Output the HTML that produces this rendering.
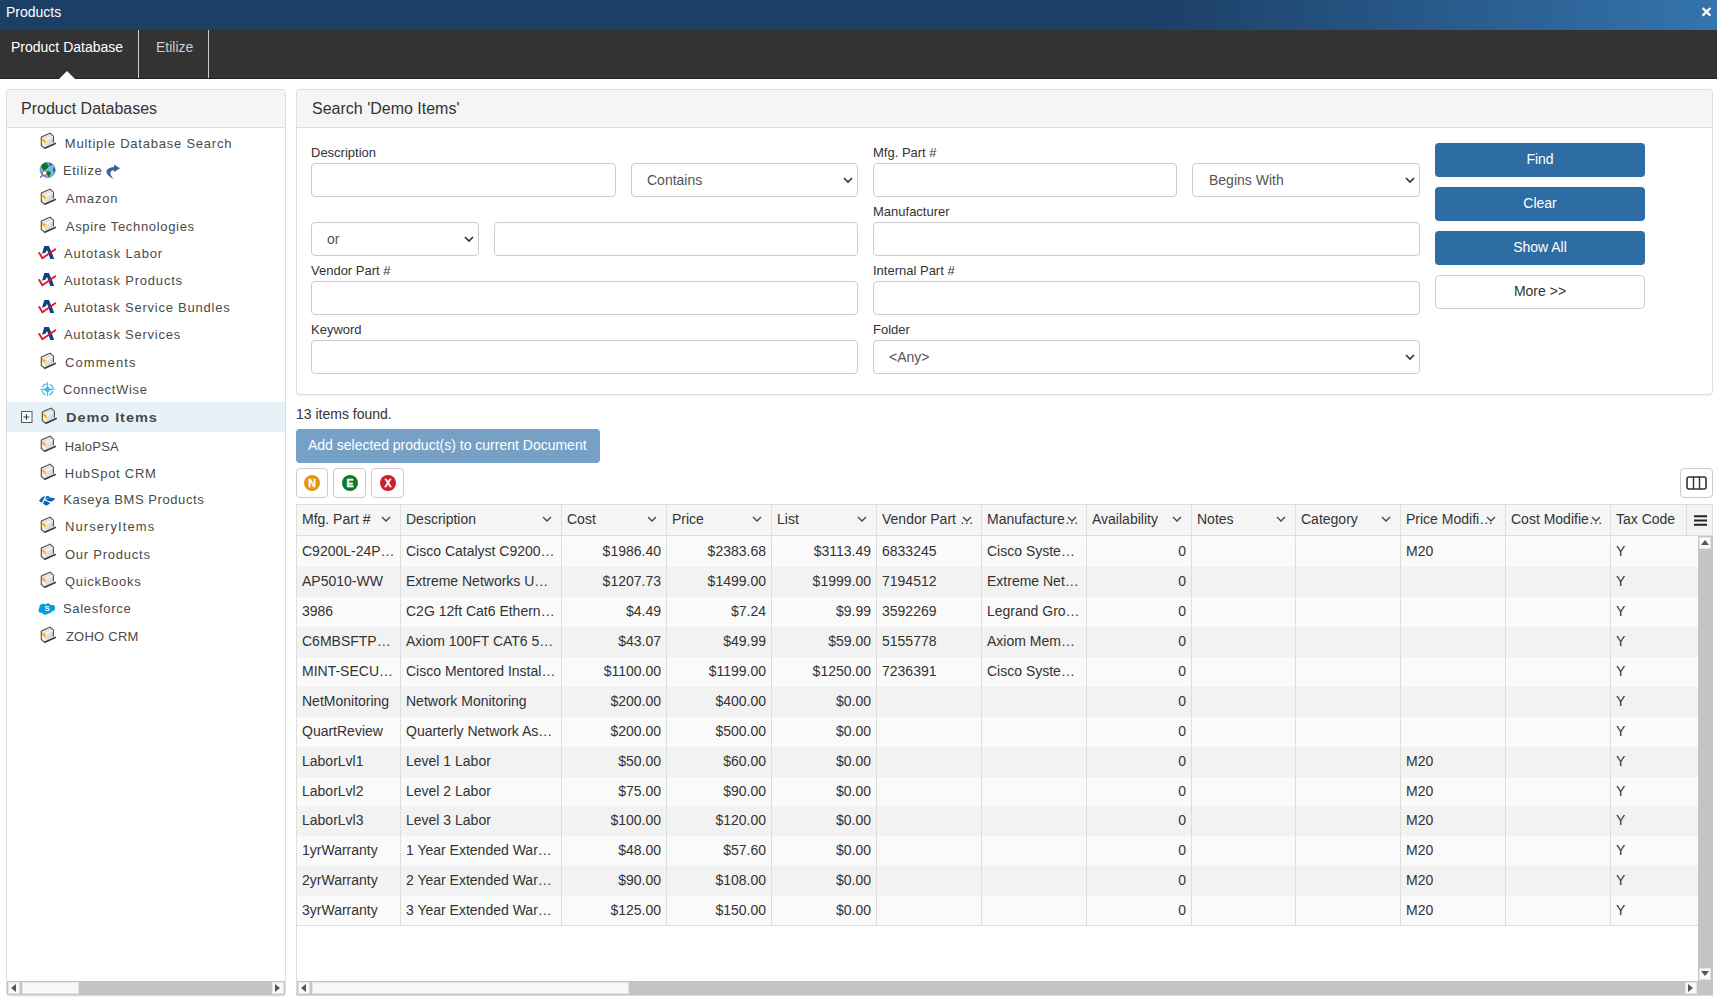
<!DOCTYPE html>
<html><head><meta charset="utf-8">
<style>
*{box-sizing:border-box;margin:0;padding:0}
html,body{width:1717px;height:1002px;overflow:hidden;background:#fff;font-family:"Liberation Sans",sans-serif;color:#333}
.abs{position:absolute}
#title{left:0;top:0;width:1717px;height:30px;background:linear-gradient(to right,#1c3f66 0%,#1c3f66 67%,#3474ad 100%);color:#fff;font-size:14px}
#title .t{left:6px;top:4px;line-height:16px}
#tabs{left:0;top:30px;width:1717px;height:49px;background:#333;border-bottom:1px solid #222}
.tab{top:0;height:48px;font-size:14px;line-height:16px;padding-top:9px}
.sep{top:0;width:1px;height:48px;background:#ccc}
.panel{border:1px solid #ddd;border-radius:4px;background:#fff;box-shadow:0 1px 1px rgba(0,0,0,.05)}
.phead{left:0;top:0;right:0;height:38px;background:#f5f5f5;border-bottom:1px solid #ddd;border-radius:3px 3px 0 0;font-size:16px;line-height:18px}
.tree{font-size:13px;letter-spacing:0.7px;color:#4a4a4a;line-height:16px;white-space:nowrap}
.lbl{font-size:13px;line-height:15px;color:#333}
.inp{border:1px solid #ccc;border-radius:4px;background:#fff;height:34px}
.sel{border:1px solid #ccc;border-radius:4px;background:#fff;height:34px;font-size:14px;color:#555;line-height:16px}
.sel span{position:absolute;top:8px}
.sel svg{position:absolute;top:13px}
.btn{border-radius:4px;background:#2e6da4;color:#fff;font-size:14px;text-align:center;line-height:16px;padding-top:8px;height:34px;width:210px}
.btn2{border:1px solid #ccc;border-radius:4px;background:#fff;color:#333;font-size:14px;text-align:center;line-height:16px;padding-top:7px;height:34px;width:210px}
.ib{border:1px solid #ccc;border-radius:4px;background:#fff;height:30px}
.grid{font-size:14px;color:#333}
.hc{position:absolute;top:0;height:30px;border-right:1px solid #ddd;line-height:16px;padding-top:7px;padding-left:5px;white-space:nowrap;overflow:hidden}
.row{position:absolute;left:0;height:30px;width:1401px}
.c{position:absolute;top:0;height:30px;border-right:1px solid #ddd;line-height:16px;padding:7px 5px 0 5px;white-space:nowrap;overflow:hidden;text-overflow:ellipsis}
.r{text-align:right}
</style></head><body>
<div id="title" class="abs"><div class="t abs">Products</div>
<svg class="abs" style="left:1701px;top:7px" width="11" height="10" viewBox="0 0 11 10"><path d="M1.6 1 L9.4 8.6 M9.4 1 L1.6 8.6" stroke="#fff" stroke-width="2.3"/></svg>
</div>
<div id="tabs" class="abs">
<div class="tab abs" style="left:11px;color:#fff">Product Database</div>
<div class="sep abs" style="left:138px"></div>
<div class="tab abs" style="left:156px;color:#ccc">Etilize</div>
<div class="sep abs" style="left:208px"></div>
<svg class="abs" style="left:59px;top:41px" width="16" height="8" viewBox="0 0 16 8"><path d="M0 8 L8 0 L16 8 Z" fill="#fff"/></svg>
</div>

<!-- left panel -->
<div class="panel abs" style="left:6px;top:89px;width:280px;height:907px">
<div class="phead abs"><div class="abs" style="left:14px;top:10px">Product Databases</div></div>
</div>
<div class="abs" style="left:7px;top:402px;width:278px;height:30px;background:#e6f2f8"></div>
<svg class="abs" style="left:40px;top:132px" width="18" height="18" viewBox="0 0 18 18">
<defs><linearGradient id="dbf40132" x1="0" y1="0" x2="1" y2="1"><stop offset="0" stop-color="#fafafa"/><stop offset="1" stop-color="#c4c4c4"/></linearGradient></defs>
<path d="M1.3 5 L10.1 1.1 L13.4 4.2 L4.6 8 Z" fill="#e4e4e4"/>
<path d="M4.6 8 L13.4 4.2 L13.4 10.6 L4.6 16.3 Z" fill="url(#dbf40132)"/>
<path d="M1.3 5 L4.6 8 L4.6 16.3 L1.3 13.4 Z" fill="#f4f4f4"/>
<path d="M1.3 5 L10.1 1.1 L13.4 4.2 L13.4 10.6 M1.3 5 L1.3 13.4 L4.6 16.3" fill="none" stroke="#4a4a4a" stroke-width="1.1"/>
<path d="M4.3 16.6 L15.8 11.2" fill="none" stroke="#3a3a3a" stroke-width="1.7"/>
<path d="M4.8 8.2 L13 4.6" fill="none" stroke="#fff" stroke-width="0.9"/>
<path d="M2 6.2 L3.6 7.2 L5.5 8 L5.8 11.5 L4.2 10.8 L2.3 8.8 Z" fill="#f7b500"/>
</svg>
<div class="tree abs" style="left:64.8px;top:135.5px;letter-spacing:0.773px;">Multiple Database Search</div>
<svg class="abs" style="left:36px;top:159px" width="22" height="22" viewBox="0 0 22 22">
<circle cx="11.65" cy="11" r="7.5" fill="#82b2e8" stroke="#3a52cc" stroke-width="0.9" stroke-dasharray="1.4 0.6"/>
<path d="M5.4 6.3 L7.8 3.9 L10.6 3.8 L13 7.2 L11.6 9 L9.6 10.4 L8.5 11.9 L6.6 10.2 L5.4 8.6 Z" fill="#007a1e"/>
<path d="M9 5.2 L10 6 L9.2 6.6 Z" fill="#82b2e8"/>
<path d="M13.3 4.1 L16.4 5.4 L14.2 6.9 L13.4 6 Z" fill="#007a1e"/>
<path d="M17.2 8.6 L19.1 10.2 L19 12.2 L17.6 13.2 L17 11 Z" fill="#007a1e"/>
<path d="M11.1 12.6 L13.2 12 L15.2 14.4 L13.4 16.4 L12.6 18.6 L11.6 16.2 L10.8 14.2 Z" fill="#007a1e"/>
<circle cx="8.6" cy="14" r="2.3" fill="#fff" stroke="#7a6050" stroke-width="0.9"/>
<path d="M6.5 16.2 L4 18.6" stroke="#6a5a50" stroke-width="1.3"/>
</svg>
<div class="tree abs" style="left:62.9px;top:162.5px;letter-spacing:0.709px;">Etilize</div>
<svg class="abs" style="left:102px;top:160px" width="22" height="22" viewBox="0 0 22 22">
<path d="M18 8.35 L12 4.6 L12 6.9 Q5 7.5 4.3 11.5 Q4.5 15.5 11.6 18.9 Q8 15 8.3 12.5 Q9 10.3 12.1 10.2 L12.1 11.9 Z" fill="#3d6197"/>
</svg>
<svg class="abs" style="left:40px;top:188px" width="18" height="18" viewBox="0 0 18 18">
<defs><linearGradient id="dbf40188" x1="0" y1="0" x2="1" y2="1"><stop offset="0" stop-color="#fafafa"/><stop offset="1" stop-color="#c4c4c4"/></linearGradient></defs>
<path d="M1.3 5 L10.1 1.1 L13.4 4.2 L4.6 8 Z" fill="#e4e4e4"/>
<path d="M4.6 8 L13.4 4.2 L13.4 10.6 L4.6 16.3 Z" fill="url(#dbf40188)"/>
<path d="M1.3 5 L4.6 8 L4.6 16.3 L1.3 13.4 Z" fill="#f4f4f4"/>
<path d="M1.3 5 L10.1 1.1 L13.4 4.2 L13.4 10.6 M1.3 5 L1.3 13.4 L4.6 16.3" fill="none" stroke="#4a4a4a" stroke-width="1.1"/>
<path d="M4.3 16.6 L15.8 11.2" fill="none" stroke="#3a3a3a" stroke-width="1.7"/>
<path d="M4.8 8.2 L13 4.6" fill="none" stroke="#fff" stroke-width="0.9"/>
<path d="M2 6.2 L3.6 7.2 L5.5 8 L5.8 11.5 L4.2 10.8 L2.3 8.8 Z" fill="#f7b500"/>
</svg>
<div class="tree abs" style="left:65.8px;top:190.5px;letter-spacing:0.788px;">Amazon</div>
<svg class="abs" style="left:40px;top:216px" width="18" height="18" viewBox="0 0 18 18">
<defs><linearGradient id="dbf40216" x1="0" y1="0" x2="1" y2="1"><stop offset="0" stop-color="#fafafa"/><stop offset="1" stop-color="#c4c4c4"/></linearGradient></defs>
<path d="M1.3 5 L10.1 1.1 L13.4 4.2 L4.6 8 Z" fill="#e4e4e4"/>
<path d="M4.6 8 L13.4 4.2 L13.4 10.6 L4.6 16.3 Z" fill="url(#dbf40216)"/>
<path d="M1.3 5 L4.6 8 L4.6 16.3 L1.3 13.4 Z" fill="#f4f4f4"/>
<path d="M1.3 5 L10.1 1.1 L13.4 4.2 L13.4 10.6 M1.3 5 L1.3 13.4 L4.6 16.3" fill="none" stroke="#4a4a4a" stroke-width="1.1"/>
<path d="M4.3 16.6 L15.8 11.2" fill="none" stroke="#3a3a3a" stroke-width="1.7"/>
<path d="M4.8 8.2 L13 4.6" fill="none" stroke="#fff" stroke-width="0.9"/>
<path d="M2 6.2 L3.6 7.2 L5.5 8 L5.8 11.5 L4.2 10.8 L2.3 8.8 Z" fill="#f7b500"/>
</svg>
<div class="tree abs" style="left:65.8px;top:218.5px;letter-spacing:0.675px;">Aspire Technologies</div>
<svg class="abs" style="left:36px;top:242px" width="24" height="20" viewBox="0 0 24 20">
<path d="M8.3 4 L12.9 4 L14.4 7.6 L16.2 11.5 L18.1 17 L14.3 17 L11.3 8.4 L10.4 8.4 L9.7 10.6 L6 11.7 Z" fill="#0d4383"/>
<path d="M3.3 10.9 L6.4 16.2 L19.3 7.2" fill="none" stroke="#e3152e" stroke-width="1.9" stroke-linejoin="round" stroke-linecap="round"/>
</svg>
<div class="tree abs" style="left:63.9px;top:245.5px;letter-spacing:0.829px;">Autotask Labor</div>
<svg class="abs" style="left:36px;top:269px" width="24" height="20" viewBox="0 0 24 20">
<path d="M8.3 4 L12.9 4 L14.4 7.6 L16.2 11.5 L18.1 17 L14.3 17 L11.3 8.4 L10.4 8.4 L9.7 10.6 L6 11.7 Z" fill="#0d4383"/>
<path d="M3.3 10.9 L6.4 16.2 L19.3 7.2" fill="none" stroke="#e3152e" stroke-width="1.9" stroke-linejoin="round" stroke-linecap="round"/>
</svg>
<div class="tree abs" style="left:63.9px;top:272.5px;letter-spacing:0.794px;">Autotask Products</div>
<svg class="abs" style="left:36px;top:296px" width="24" height="20" viewBox="0 0 24 20">
<path d="M8.3 4 L12.9 4 L14.4 7.6 L16.2 11.5 L18.1 17 L14.3 17 L11.3 8.4 L10.4 8.4 L9.7 10.6 L6 11.7 Z" fill="#0d4383"/>
<path d="M3.3 10.9 L6.4 16.2 L19.3 7.2" fill="none" stroke="#e3152e" stroke-width="1.9" stroke-linejoin="round" stroke-linecap="round"/>
</svg>
<div class="tree abs" style="left:63.9px;top:299.5px;letter-spacing:0.768px;">Autotask Service Bundles</div>
<svg class="abs" style="left:36px;top:323px" width="24" height="20" viewBox="0 0 24 20">
<path d="M8.3 4 L12.9 4 L14.4 7.6 L16.2 11.5 L18.1 17 L14.3 17 L11.3 8.4 L10.4 8.4 L9.7 10.6 L6 11.7 Z" fill="#0d4383"/>
<path d="M3.3 10.9 L6.4 16.2 L19.3 7.2" fill="none" stroke="#e3152e" stroke-width="1.9" stroke-linejoin="round" stroke-linecap="round"/>
</svg>
<div class="tree abs" style="left:63.9px;top:326.5px;letter-spacing:0.772px;">Autotask Services</div>
<svg class="abs" style="left:40px;top:352px" width="18" height="18" viewBox="0 0 18 18">
<defs><linearGradient id="dbf40352" x1="0" y1="0" x2="1" y2="1"><stop offset="0" stop-color="#fafafa"/><stop offset="1" stop-color="#c4c4c4"/></linearGradient></defs>
<path d="M1.3 5 L10.1 1.1 L13.4 4.2 L4.6 8 Z" fill="#e4e4e4"/>
<path d="M4.6 8 L13.4 4.2 L13.4 10.6 L4.6 16.3 Z" fill="url(#dbf40352)"/>
<path d="M1.3 5 L4.6 8 L4.6 16.3 L1.3 13.4 Z" fill="#f4f4f4"/>
<path d="M1.3 5 L10.1 1.1 L13.4 4.2 L13.4 10.6 M1.3 5 L1.3 13.4 L4.6 16.3" fill="none" stroke="#4a4a4a" stroke-width="1.1"/>
<path d="M4.3 16.6 L15.8 11.2" fill="none" stroke="#3a3a3a" stroke-width="1.7"/>
<path d="M4.8 8.2 L13 4.6" fill="none" stroke="#fff" stroke-width="0.9"/>
<path d="M2 6.2 L3.6 7.2 L5.5 8 L5.8 11.5 L4.2 10.8 L2.3 8.8 Z" fill="#f7b500"/>
</svg>
<div class="tree abs" style="left:64.9px;top:354.5px;letter-spacing:1.108px;">Comments</div>
<svg class="abs" style="left:36px;top:378px" width="24" height="20" viewBox="0 0 24 20">
<circle cx="11.5" cy="11.4" r="5.6" fill="none" stroke="#4cb8ea" stroke-width="1.3" stroke-dasharray="5.5 3.3" stroke-dashoffset="7.15"/>
<path d="M11.5 4 C11.5 9.4 13.4 11.4 18.8 11.4 C13.4 11.4 11.5 13.4 11.5 18.4 C11.5 13.4 9.6 11.4 4.1 11.4 C9.6 11.4 11.5 9.4 11.5 4 Z" fill="#4cb8ea"/><path d="M11.5 4.2 V18.2 M4.3 11.4 H18.6" stroke="#4cb8ea" stroke-width="1"/>
</svg>
<div class="tree abs" style="left:62.9px;top:381.5px;letter-spacing:0.682px;">ConnectWise</div>
<svg class="abs" style="left:41px;top:407px" width="18" height="18" viewBox="0 0 18 18">
<defs><linearGradient id="dbf41407" x1="0" y1="0" x2="1" y2="1"><stop offset="0" stop-color="#fafafa"/><stop offset="1" stop-color="#c4c4c4"/></linearGradient></defs>
<path d="M1.3 5 L10.1 1.1 L13.4 4.2 L4.6 8 Z" fill="#e4e4e4"/>
<path d="M4.6 8 L13.4 4.2 L13.4 10.6 L4.6 16.3 Z" fill="url(#dbf41407)"/>
<path d="M1.3 5 L4.6 8 L4.6 16.3 L1.3 13.4 Z" fill="#f4f4f4"/>
<path d="M1.3 5 L10.1 1.1 L13.4 4.2 L13.4 10.6 M1.3 5 L1.3 13.4 L4.6 16.3" fill="none" stroke="#4a4a4a" stroke-width="1.1"/>
<path d="M4.3 16.6 L15.8 11.2" fill="none" stroke="#3a3a3a" stroke-width="1.7"/>
<path d="M4.8 8.2 L13 4.6" fill="none" stroke="#fff" stroke-width="0.9"/>
<path d="M2 6.2 L3.6 7.2 L5.5 8 L5.8 11.5 L4.2 10.8 L2.3 8.8 Z" fill="#f7b500"/>
</svg>
<div class="tree abs" style="left:65.5px;top:409.5px;letter-spacing:0.830px;font-weight:bold;transform:scaleX(1.12);transform-origin:0 0;">Demo Items</div>
<svg class="abs" style="left:21px;top:411px" width="12" height="12" viewBox="0 0 12 12">
<rect x="0.5" y="0.5" width="10.5" height="11" fill="#f4fbfd" stroke="#5a5a5a" stroke-width="1"/>
<path d="M2.5 6 H8.2 M5.4 3 V9" stroke="#333" stroke-width="1"/>
</svg>
<svg class="abs" style="left:40px;top:435px" width="18" height="18" viewBox="0 0 18 18">
<defs><linearGradient id="dbf40435" x1="0" y1="0" x2="1" y2="1"><stop offset="0" stop-color="#fafafa"/><stop offset="1" stop-color="#c4c4c4"/></linearGradient></defs>
<path d="M1.3 5 L10.1 1.1 L13.4 4.2 L4.6 8 Z" fill="#e4e4e4"/>
<path d="M4.6 8 L13.4 4.2 L13.4 10.6 L4.6 16.3 Z" fill="url(#dbf40435)"/>
<path d="M1.3 5 L4.6 8 L4.6 16.3 L1.3 13.4 Z" fill="#f4f4f4"/>
<path d="M1.3 5 L10.1 1.1 L13.4 4.2 L13.4 10.6 M1.3 5 L1.3 13.4 L4.6 16.3" fill="none" stroke="#4a4a4a" stroke-width="1.1"/>
<path d="M4.3 16.6 L15.8 11.2" fill="none" stroke="#3a3a3a" stroke-width="1.7"/>
<path d="M4.8 8.2 L13 4.6" fill="none" stroke="#fff" stroke-width="0.9"/>
<path d="M2 6.2 L3.6 7.2 L5.5 8 L5.8 11.5 L4.2 10.8 L2.3 8.8 Z" fill="#f7b500"/>
</svg>
<div class="tree abs" style="left:64.8px;top:438.5px;letter-spacing:0.187px;">HaloPSA</div>
<svg class="abs" style="left:40px;top:463px" width="18" height="18" viewBox="0 0 18 18">
<defs><linearGradient id="dbf40463" x1="0" y1="0" x2="1" y2="1"><stop offset="0" stop-color="#fafafa"/><stop offset="1" stop-color="#c4c4c4"/></linearGradient></defs>
<path d="M1.3 5 L10.1 1.1 L13.4 4.2 L4.6 8 Z" fill="#e4e4e4"/>
<path d="M4.6 8 L13.4 4.2 L13.4 10.6 L4.6 16.3 Z" fill="url(#dbf40463)"/>
<path d="M1.3 5 L4.6 8 L4.6 16.3 L1.3 13.4 Z" fill="#f4f4f4"/>
<path d="M1.3 5 L10.1 1.1 L13.4 4.2 L13.4 10.6 M1.3 5 L1.3 13.4 L4.6 16.3" fill="none" stroke="#4a4a4a" stroke-width="1.1"/>
<path d="M4.3 16.6 L15.8 11.2" fill="none" stroke="#3a3a3a" stroke-width="1.7"/>
<path d="M4.8 8.2 L13 4.6" fill="none" stroke="#fff" stroke-width="0.9"/>
<path d="M2 6.2 L3.6 7.2 L5.5 8 L5.8 11.5 L4.2 10.8 L2.3 8.8 Z" fill="#f7b500"/>
</svg>
<div class="tree abs" style="left:64.8px;top:465.5px;letter-spacing:0.722px;">HubSpot CRM</div>
<svg class="abs" style="left:36px;top:488px" width="24" height="20" viewBox="0 0 24 20">
<path d="M3 12.4 L6 9.6 L8.6 8 L8.8 9 L7.4 11.5 L6.5 13.5 L5.4 14.8 L4 13.8 Z" fill="#0d62b8"/>
<path d="M10 8.2 L12.5 8 L13.5 9.6 L18.8 10.2 L18.5 11.6 L15.5 13.8 L11.5 12.8 L9.5 10.8 Z M10.8 10.4 Q11.6 9.6 12.8 10.4 Q11.6 11.1 10.8 10.4 Z" fill="#0d62b8" fill-rule="evenodd"/>
<path d="M8.5 12.2 L10.5 13.2 L13 14.2 L14 15.5 L11.5 17 L10.4 17.8 L7.2 15.8 L7.5 14 Z" fill="#0d62b8"/>
</svg>
<div class="tree abs" style="left:63.2px;top:491.5px;letter-spacing:0.580px;">Kaseya BMS Products</div>
<svg class="abs" style="left:40px;top:516px" width="18" height="18" viewBox="0 0 18 18">
<defs><linearGradient id="dbf40516" x1="0" y1="0" x2="1" y2="1"><stop offset="0" stop-color="#fafafa"/><stop offset="1" stop-color="#c4c4c4"/></linearGradient></defs>
<path d="M1.3 5 L10.1 1.1 L13.4 4.2 L4.6 8 Z" fill="#e4e4e4"/>
<path d="M4.6 8 L13.4 4.2 L13.4 10.6 L4.6 16.3 Z" fill="url(#dbf40516)"/>
<path d="M1.3 5 L4.6 8 L4.6 16.3 L1.3 13.4 Z" fill="#f4f4f4"/>
<path d="M1.3 5 L10.1 1.1 L13.4 4.2 L13.4 10.6 M1.3 5 L1.3 13.4 L4.6 16.3" fill="none" stroke="#4a4a4a" stroke-width="1.1"/>
<path d="M4.3 16.6 L15.8 11.2" fill="none" stroke="#3a3a3a" stroke-width="1.7"/>
<path d="M4.8 8.2 L13 4.6" fill="none" stroke="#fff" stroke-width="0.9"/>
<path d="M2 6.2 L3.6 7.2 L5.5 8 L5.8 11.5 L4.2 10.8 L2.3 8.8 Z" fill="#f7b500"/>
</svg>
<div class="tree abs" style="left:64.9px;top:518.5px;letter-spacing:1.101px;">NurseryItems</div>
<svg class="abs" style="left:40px;top:543px" width="18" height="18" viewBox="0 0 18 18">
<defs><linearGradient id="dbf40543" x1="0" y1="0" x2="1" y2="1"><stop offset="0" stop-color="#fafafa"/><stop offset="1" stop-color="#c4c4c4"/></linearGradient></defs>
<path d="M1.3 5 L10.1 1.1 L13.4 4.2 L4.6 8 Z" fill="#e4e4e4"/>
<path d="M4.6 8 L13.4 4.2 L13.4 10.6 L4.6 16.3 Z" fill="url(#dbf40543)"/>
<path d="M1.3 5 L4.6 8 L4.6 16.3 L1.3 13.4 Z" fill="#f4f4f4"/>
<path d="M1.3 5 L10.1 1.1 L13.4 4.2 L13.4 10.6 M1.3 5 L1.3 13.4 L4.6 16.3" fill="none" stroke="#4a4a4a" stroke-width="1.1"/>
<path d="M4.3 16.6 L15.8 11.2" fill="none" stroke="#3a3a3a" stroke-width="1.7"/>
<path d="M4.8 8.2 L13 4.6" fill="none" stroke="#fff" stroke-width="0.9"/>
<path d="M2 6.2 L3.6 7.2 L5.5 8 L5.8 11.5 L4.2 10.8 L2.3 8.8 Z" fill="#f7b500"/>
</svg>
<div class="tree abs" style="left:64.9px;top:546.5px;letter-spacing:0.766px;">Our Products</div>
<svg class="abs" style="left:40px;top:571px" width="18" height="18" viewBox="0 0 18 18">
<defs><linearGradient id="dbf40571" x1="0" y1="0" x2="1" y2="1"><stop offset="0" stop-color="#fafafa"/><stop offset="1" stop-color="#c4c4c4"/></linearGradient></defs>
<path d="M1.3 5 L10.1 1.1 L13.4 4.2 L4.6 8 Z" fill="#e4e4e4"/>
<path d="M4.6 8 L13.4 4.2 L13.4 10.6 L4.6 16.3 Z" fill="url(#dbf40571)"/>
<path d="M1.3 5 L4.6 8 L4.6 16.3 L1.3 13.4 Z" fill="#f4f4f4"/>
<path d="M1.3 5 L10.1 1.1 L13.4 4.2 L13.4 10.6 M1.3 5 L1.3 13.4 L4.6 16.3" fill="none" stroke="#4a4a4a" stroke-width="1.1"/>
<path d="M4.3 16.6 L15.8 11.2" fill="none" stroke="#3a3a3a" stroke-width="1.7"/>
<path d="M4.8 8.2 L13 4.6" fill="none" stroke="#fff" stroke-width="0.9"/>
<path d="M2 6.2 L3.6 7.2 L5.5 8 L5.8 11.5 L4.2 10.8 L2.3 8.8 Z" fill="#f7b500"/>
</svg>
<div class="tree abs" style="left:64.9px;top:573.5px;letter-spacing:0.716px;">QuickBooks</div>
<svg class="abs" style="left:36px;top:598px" width="24" height="20" viewBox="0 0 24 20">
<g fill="#049ee0"><circle cx="7" cy="9.3" r="3.6"/><circle cx="11.8" cy="7.6" r="2.4"/><circle cx="15.8" cy="10.1" r="3.3"/><circle cx="9.4" cy="13.6" r="3.2"/><circle cx="5.2" cy="12.2" r="2.6"/><circle cx="13" cy="12.8" r="2.6"/></g>
<text x="11.1" y="13.1" font-family="Liberation Sans" font-size="7" font-weight="bold" fill="#fff" text-anchor="middle">S</text>
</svg>
<div class="tree abs" style="left:62.9px;top:600.5px;letter-spacing:0.723px;">Salesforce</div>
<svg class="abs" style="left:40px;top:626px" width="18" height="18" viewBox="0 0 18 18">
<defs><linearGradient id="dbf40626" x1="0" y1="0" x2="1" y2="1"><stop offset="0" stop-color="#fafafa"/><stop offset="1" stop-color="#c4c4c4"/></linearGradient></defs>
<path d="M1.3 5 L10.1 1.1 L13.4 4.2 L4.6 8 Z" fill="#e4e4e4"/>
<path d="M4.6 8 L13.4 4.2 L13.4 10.6 L4.6 16.3 Z" fill="url(#dbf40626)"/>
<path d="M1.3 5 L4.6 8 L4.6 16.3 L1.3 13.4 Z" fill="#f4f4f4"/>
<path d="M1.3 5 L10.1 1.1 L13.4 4.2 L13.4 10.6 M1.3 5 L1.3 13.4 L4.6 16.3" fill="none" stroke="#4a4a4a" stroke-width="1.1"/>
<path d="M4.3 16.6 L15.8 11.2" fill="none" stroke="#3a3a3a" stroke-width="1.7"/>
<path d="M4.8 8.2 L13 4.6" fill="none" stroke="#fff" stroke-width="0.9"/>
<path d="M2 6.2 L3.6 7.2 L5.5 8 L5.8 11.5 L4.2 10.8 L2.3 8.8 Z" fill="#f7b500"/>
</svg>
<div class="tree abs" style="left:65.9px;top:628.5px;letter-spacing:0.251px;">ZOHO CRM</div>
<div class="abs" style="left:7px;top:981px;width:278px;height:14px;background:#c4c4c4"></div>
<div class="abs" style="left:8px;top:982px;width:12px;height:12px;background:#f8f8f8;border:1px solid #e4e4e4"></div>
<svg class="abs" style="left:11px;top:984px" width="6" height="8"><path d="M5 0 L0 4 L5 8Z" fill="#555"/></svg>
<div class="abs" style="left:22px;top:982px;width:57px;height:12px;background:#f8f8f8;border:1px solid #e4e4e4"></div>
<div class="abs" style="left:272px;top:982px;width:12px;height:12px;background:#f8f8f8;border:1px solid #e4e4e4"></div>
<svg class="abs" style="left:275px;top:984px" width="6" height="8"><path d="M0 0 L5 4 L0 8Z" fill="#555"/></svg>

<!-- search panel -->
<div class="panel abs" style="left:296px;top:89px;width:1417px;height:306px">
<div class="phead abs"><div class="abs" style="left:15px;top:10px">Search 'Demo Items'</div></div>
</div>
<div class="lbl abs" style="left:311px;top:145px">Description</div>
<div class="inp abs" style="left:311px;top:163px;width:305px"></div>
<div class="sel abs" style="left:631px;top:163px;width:227px"><span style="left:15px">Contains</span><svg style="left:211px" width="10" height="7" viewBox="0 0 10 7"><path d="M1 1 L5 5 L9 1" fill="none" stroke="#333" stroke-width="1.7"/></svg></div>
<div class="sel abs" style="left:311px;top:222px;width:168px"><span style="left:15px">or</span><svg style="left:152px" width="10" height="7" viewBox="0 0 10 7"><path d="M1 1 L5 5 L9 1" fill="none" stroke="#333" stroke-width="1.7"/></svg></div>
<div class="inp abs" style="left:494px;top:222px;width:364px"></div>
<div class="lbl abs" style="left:311px;top:263px">Vendor Part #</div>
<div class="inp abs" style="left:311px;top:281px;width:547px"></div>
<div class="lbl abs" style="left:311px;top:322px">Keyword</div>
<div class="inp abs" style="left:311px;top:340px;width:547px"></div>

<div class="lbl abs" style="left:873px;top:145px">Mfg. Part #</div>
<div class="inp abs" style="left:873px;top:163px;width:304px"></div>
<div class="sel abs" style="left:1192px;top:163px;width:228px"><span style="left:16px">Begins With</span><svg style="left:212px" width="10" height="7" viewBox="0 0 10 7"><path d="M1 1 L5 5 L9 1" fill="none" stroke="#333" stroke-width="1.7"/></svg></div>
<div class="lbl abs" style="left:873px;top:204px">Manufacturer</div>
<div class="inp abs" style="left:873px;top:222px;width:547px"></div>
<div class="lbl abs" style="left:873px;top:263px">Internal Part #</div>
<div class="inp abs" style="left:873px;top:281px;width:547px"></div>
<div class="lbl abs" style="left:873px;top:322px">Folder</div>
<div class="sel abs" style="left:873px;top:340px;width:547px"><span style="left:15px">&lt;Any&gt;</span><svg style="left:531px" width="10" height="7" viewBox="0 0 10 7"><path d="M1 1 L5 5 L9 1" fill="none" stroke="#333" stroke-width="1.7"/></svg></div>

<div class="btn abs" style="left:1435px;top:143px">Find</div>
<div class="btn abs" style="left:1435px;top:187px">Clear</div>
<div class="btn abs" style="left:1435px;top:231px">Show All</div>
<div class="btn2 abs" style="left:1435px;top:275px">More &gt;&gt;</div>

<div class="abs" style="left:296px;top:406px;font-size:14px;line-height:16px">13 items found.</div>
<div class="abs" style="left:296px;top:429px;width:304px;height:34px;border-radius:4px;background:#77a0c6;color:#fff;font-size:14px;line-height:16px;padding:8px 0 0 12px">Add selected product(s) to current Document</div>

<div class="ib abs" style="left:296px;top:468px;width:32px"></div>
<svg class="abs" style="left:304px;top:475px" width="16" height="16" viewBox="0 0 16 16"><circle cx="8" cy="8" r="8" fill="#e5960f"/><text x="8" y="11.6" font-family="Liberation Sans" font-size="10.5" font-weight="bold" fill="#fff" stroke="#fff" stroke-width="0.3" text-anchor="middle">N</text></svg>
<div class="ib abs" style="left:333px;top:468px;width:33px"></div>
<svg class="abs" style="left:342px;top:475px" width="16" height="16" viewBox="0 0 16 16"><circle cx="8" cy="8" r="8" fill="#0b7a2a"/><text x="8" y="11.6" font-family="Liberation Sans" font-size="10.5" font-weight="bold" fill="#fff" stroke="#fff" stroke-width="0.3" text-anchor="middle">E</text></svg>
<div class="ib abs" style="left:371px;top:468px;width:33px"></div>
<svg class="abs" style="left:380px;top:475px" width="16" height="16" viewBox="0 0 16 16"><circle cx="8" cy="8" r="8" fill="#c8202a"/><text x="8" y="11.6" font-family="Liberation Sans" font-size="10.5" font-weight="bold" fill="#fff" stroke="#fff" stroke-width="0.3" text-anchor="middle">X</text></svg>
<div class="ib abs" style="left:1680px;top:468px;width:33px"></div>
<svg class="abs" style="left:1686px;top:476px" width="21" height="14" viewBox="0 0 21 14"><rect x="1" y="1" width="19" height="12" rx="2" fill="none" stroke="#333" stroke-width="1.6"/><path d="M7.5 1 V13 M13.5 1 V13" stroke="#333" stroke-width="1.4"/></svg>
<div class="abs" style="left:296px;top:504px;width:1417px;height:1px;background:#ddd"></div>
<div class="abs" style="left:296px;top:504px;width:1px;height:492px;background:#ddd"></div>
<div class="abs" style="left:296px;top:995px;width:1417px;height:1px;background:#ddd"></div>
<div class="abs" style="left:1712px;top:504px;width:1px;height:32px;background:#ddd"></div>
<div class="abs" style="left:297px;top:505px;width:1415px;height:30px;background:#f5f5f5"></div>
<div class="abs" style="left:1687px;top:505px;width:25px;height:30px;background:#f2f2f2"></div>
<div class="abs" style="left:297px;top:535px;width:1415px;height:1px;background:#ddd"></div>
<svg class="abs" style="left:1694px;top:515px" width="13" height="11" viewBox="0 0 13 11"><path d="M0 1.2 H13 M0 5.5 H13 M0 9.8 H13" stroke="#222" stroke-width="2"/></svg>
<div class="abs" style="left:400px;top:505px;width:1px;height:30px;background:#ddd"></div>
<div class="grid abs" style="left:302px;top:505px;line-height:16px;padding-top:6px;white-space:nowrap">Mfg. Part #</div>
<svg class="abs" style="left:381px;top:516px" width="10" height="7" viewBox="0 0 10 7"><path d="M1 1 L5 5 L9 1" fill="none" stroke="#444" stroke-width="1.3"/></svg>
<div class="abs" style="left:561px;top:505px;width:1px;height:30px;background:#ddd"></div>
<div class="grid abs" style="left:406px;top:505px;line-height:16px;padding-top:6px;white-space:nowrap">Description</div>
<svg class="abs" style="left:542px;top:516px" width="10" height="7" viewBox="0 0 10 7"><path d="M1 1 L5 5 L9 1" fill="none" stroke="#444" stroke-width="1.3"/></svg>
<div class="abs" style="left:666px;top:505px;width:1px;height:30px;background:#ddd"></div>
<div class="grid abs" style="left:567px;top:505px;line-height:16px;padding-top:6px;white-space:nowrap">Cost</div>
<svg class="abs" style="left:647px;top:516px" width="10" height="7" viewBox="0 0 10 7"><path d="M1 1 L5 5 L9 1" fill="none" stroke="#444" stroke-width="1.3"/></svg>
<div class="abs" style="left:771px;top:505px;width:1px;height:30px;background:#ddd"></div>
<div class="grid abs" style="left:672px;top:505px;line-height:16px;padding-top:6px;white-space:nowrap">Price</div>
<svg class="abs" style="left:752px;top:516px" width="10" height="7" viewBox="0 0 10 7"><path d="M1 1 L5 5 L9 1" fill="none" stroke="#444" stroke-width="1.3"/></svg>
<div class="abs" style="left:876px;top:505px;width:1px;height:30px;background:#ddd"></div>
<div class="grid abs" style="left:777px;top:505px;line-height:16px;padding-top:6px;white-space:nowrap">List</div>
<svg class="abs" style="left:857px;top:516px" width="10" height="7" viewBox="0 0 10 7"><path d="M1 1 L5 5 L9 1" fill="none" stroke="#444" stroke-width="1.3"/></svg>
<div class="abs" style="left:981px;top:505px;width:1px;height:30px;background:#ddd"></div>
<div class="grid abs" style="left:882px;top:505px;line-height:16px;padding-top:6px;white-space:nowrap">Vendor Part …</div>
<svg class="abs" style="left:962px;top:516px" width="10" height="7" viewBox="0 0 10 7"><path d="M1 1 L5 5 L9 1" fill="none" stroke="#444" stroke-width="1.3"/></svg>
<div class="abs" style="left:1086px;top:505px;width:1px;height:30px;background:#ddd"></div>
<div class="grid abs" style="left:987px;top:505px;line-height:16px;padding-top:6px;white-space:nowrap">Manufacture…</div>
<svg class="abs" style="left:1067px;top:516px" width="10" height="7" viewBox="0 0 10 7"><path d="M1 1 L5 5 L9 1" fill="none" stroke="#444" stroke-width="1.3"/></svg>
<div class="abs" style="left:1191px;top:505px;width:1px;height:30px;background:#ddd"></div>
<div class="grid abs" style="left:1092px;top:505px;line-height:16px;padding-top:6px;white-space:nowrap">Availability</div>
<svg class="abs" style="left:1172px;top:516px" width="10" height="7" viewBox="0 0 10 7"><path d="M1 1 L5 5 L9 1" fill="none" stroke="#444" stroke-width="1.3"/></svg>
<div class="abs" style="left:1295px;top:505px;width:1px;height:30px;background:#ddd"></div>
<div class="grid abs" style="left:1197px;top:505px;line-height:16px;padding-top:6px;white-space:nowrap">Notes</div>
<svg class="abs" style="left:1276px;top:516px" width="10" height="7" viewBox="0 0 10 7"><path d="M1 1 L5 5 L9 1" fill="none" stroke="#444" stroke-width="1.3"/></svg>
<div class="abs" style="left:1400px;top:505px;width:1px;height:30px;background:#ddd"></div>
<div class="grid abs" style="left:1301px;top:505px;line-height:16px;padding-top:6px;white-space:nowrap">Category</div>
<svg class="abs" style="left:1381px;top:516px" width="10" height="7" viewBox="0 0 10 7"><path d="M1 1 L5 5 L9 1" fill="none" stroke="#444" stroke-width="1.3"/></svg>
<div class="abs" style="left:1505px;top:505px;width:1px;height:30px;background:#ddd"></div>
<div class="grid abs" style="left:1406px;top:505px;line-height:16px;padding-top:6px;white-space:nowrap">Price Modifi…</div>
<svg class="abs" style="left:1486px;top:516px" width="10" height="7" viewBox="0 0 10 7"><path d="M1 1 L5 5 L9 1" fill="none" stroke="#444" stroke-width="1.3"/></svg>
<div class="abs" style="left:1610px;top:505px;width:1px;height:30px;background:#ddd"></div>
<div class="grid abs" style="left:1511px;top:505px;line-height:16px;padding-top:6px;white-space:nowrap">Cost Modifie…</div>
<svg class="abs" style="left:1591px;top:516px" width="10" height="7" viewBox="0 0 10 7"><path d="M1 1 L5 5 L9 1" fill="none" stroke="#444" stroke-width="1.3"/></svg>
<div class="abs" style="left:1686px;top:505px;width:1px;height:30px;background:#ddd"></div>
<div class="grid abs" style="left:1616px;top:505px;line-height:16px;padding-top:6px;white-space:nowrap">Tax Code</div>
<div class="abs" style="left:297px;top:536px;width:1401px;height:31px;background:#fafafa"></div>
<div class="abs" style="left:297px;top:567px;width:1401px;height:30px;background:#f2f2f2"></div>
<div class="abs" style="left:297px;top:597px;width:1401px;height:30px;background:#fafafa"></div>
<div class="abs" style="left:297px;top:627px;width:1401px;height:30px;background:#f2f2f2"></div>
<div class="abs" style="left:297px;top:657px;width:1401px;height:30px;background:#fafafa"></div>
<div class="abs" style="left:297px;top:687px;width:1401px;height:30px;background:#f2f2f2"></div>
<div class="abs" style="left:297px;top:717px;width:1401px;height:30px;background:#fafafa"></div>
<div class="abs" style="left:297px;top:747px;width:1401px;height:30px;background:#f2f2f2"></div>
<div class="abs" style="left:297px;top:777px;width:1401px;height:29px;background:#fafafa"></div>
<div class="abs" style="left:297px;top:806px;width:1401px;height:30px;background:#f2f2f2"></div>
<div class="abs" style="left:297px;top:836px;width:1401px;height:30px;background:#fafafa"></div>
<div class="abs" style="left:297px;top:866px;width:1401px;height:30px;background:#f2f2f2"></div>
<div class="abs" style="left:297px;top:896px;width:1401px;height:29px;background:#fafafa"></div>
<div class="abs" style="left:400px;top:537px;width:1px;height:388px;background:#ddd"></div>
<div class="abs" style="left:561px;top:537px;width:1px;height:388px;background:#ddd"></div>
<div class="abs" style="left:666px;top:537px;width:1px;height:388px;background:#ddd"></div>
<div class="abs" style="left:771px;top:537px;width:1px;height:388px;background:#ddd"></div>
<div class="abs" style="left:876px;top:537px;width:1px;height:388px;background:#ddd"></div>
<div class="abs" style="left:981px;top:537px;width:1px;height:388px;background:#ddd"></div>
<div class="abs" style="left:1086px;top:537px;width:1px;height:388px;background:#ddd"></div>
<div class="abs" style="left:1191px;top:537px;width:1px;height:388px;background:#ddd"></div>
<div class="abs" style="left:1295px;top:537px;width:1px;height:388px;background:#ddd"></div>
<div class="abs" style="left:1400px;top:537px;width:1px;height:388px;background:#ddd"></div>
<div class="abs" style="left:1505px;top:537px;width:1px;height:388px;background:#ddd"></div>
<div class="abs" style="left:1610px;top:537px;width:1px;height:388px;background:#ddd"></div>
<div class="grid abs" style="left:302px;top:537px;line-height:16px;padding-top:6px;white-space:nowrap">C9200L-24P…</div>
<div class="grid abs" style="left:406px;top:537px;line-height:16px;padding-top:6px;white-space:nowrap">Cisco Catalyst C9200…</div>
<div class="grid abs" style="left:562px;top:537px;width:99px;text-align:right;line-height:16px;padding-top:6px;white-space:nowrap">$1986.40</div>
<div class="grid abs" style="left:667px;top:537px;width:99px;text-align:right;line-height:16px;padding-top:6px;white-space:nowrap">$2383.68</div>
<div class="grid abs" style="left:772px;top:537px;width:99px;text-align:right;line-height:16px;padding-top:6px;white-space:nowrap">$3113.49</div>
<div class="grid abs" style="left:882px;top:537px;line-height:16px;padding-top:6px;white-space:nowrap">6833245</div>
<div class="grid abs" style="left:987px;top:537px;line-height:16px;padding-top:6px;white-space:nowrap">Cisco Syste…</div>
<div class="grid abs" style="left:1087px;top:537px;width:99px;text-align:right;line-height:16px;padding-top:6px;white-space:nowrap">0</div>
<div class="grid abs" style="left:1406px;top:537px;line-height:16px;padding-top:6px;white-space:nowrap">M20</div>
<div class="grid abs" style="left:1616px;top:537px;line-height:16px;padding-top:6px;white-space:nowrap">Y</div>
<div class="grid abs" style="left:302px;top:567px;line-height:16px;padding-top:6px;white-space:nowrap">AP5010-WW</div>
<div class="grid abs" style="left:406px;top:567px;line-height:16px;padding-top:6px;white-space:nowrap">Extreme Networks U…</div>
<div class="grid abs" style="left:562px;top:567px;width:99px;text-align:right;line-height:16px;padding-top:6px;white-space:nowrap">$1207.73</div>
<div class="grid abs" style="left:667px;top:567px;width:99px;text-align:right;line-height:16px;padding-top:6px;white-space:nowrap">$1499.00</div>
<div class="grid abs" style="left:772px;top:567px;width:99px;text-align:right;line-height:16px;padding-top:6px;white-space:nowrap">$1999.00</div>
<div class="grid abs" style="left:882px;top:567px;line-height:16px;padding-top:6px;white-space:nowrap">7194512</div>
<div class="grid abs" style="left:987px;top:567px;line-height:16px;padding-top:6px;white-space:nowrap">Extreme Net…</div>
<div class="grid abs" style="left:1087px;top:567px;width:99px;text-align:right;line-height:16px;padding-top:6px;white-space:nowrap">0</div>
<div class="grid abs" style="left:1616px;top:567px;line-height:16px;padding-top:6px;white-space:nowrap">Y</div>
<div class="grid abs" style="left:302px;top:597px;line-height:16px;padding-top:6px;white-space:nowrap">3986</div>
<div class="grid abs" style="left:406px;top:597px;line-height:16px;padding-top:6px;white-space:nowrap">C2G 12ft Cat6 Ethern…</div>
<div class="grid abs" style="left:562px;top:597px;width:99px;text-align:right;line-height:16px;padding-top:6px;white-space:nowrap">$4.49</div>
<div class="grid abs" style="left:667px;top:597px;width:99px;text-align:right;line-height:16px;padding-top:6px;white-space:nowrap">$7.24</div>
<div class="grid abs" style="left:772px;top:597px;width:99px;text-align:right;line-height:16px;padding-top:6px;white-space:nowrap">$9.99</div>
<div class="grid abs" style="left:882px;top:597px;line-height:16px;padding-top:6px;white-space:nowrap">3592269</div>
<div class="grid abs" style="left:987px;top:597px;line-height:16px;padding-top:6px;white-space:nowrap">Legrand Gro…</div>
<div class="grid abs" style="left:1087px;top:597px;width:99px;text-align:right;line-height:16px;padding-top:6px;white-space:nowrap">0</div>
<div class="grid abs" style="left:1616px;top:597px;line-height:16px;padding-top:6px;white-space:nowrap">Y</div>
<div class="grid abs" style="left:302px;top:627px;line-height:16px;padding-top:6px;white-space:nowrap">C6MBSFTP…</div>
<div class="grid abs" style="left:406px;top:627px;line-height:16px;padding-top:6px;white-space:nowrap">Axiom 100FT CAT6 5…</div>
<div class="grid abs" style="left:562px;top:627px;width:99px;text-align:right;line-height:16px;padding-top:6px;white-space:nowrap">$43.07</div>
<div class="grid abs" style="left:667px;top:627px;width:99px;text-align:right;line-height:16px;padding-top:6px;white-space:nowrap">$49.99</div>
<div class="grid abs" style="left:772px;top:627px;width:99px;text-align:right;line-height:16px;padding-top:6px;white-space:nowrap">$59.00</div>
<div class="grid abs" style="left:882px;top:627px;line-height:16px;padding-top:6px;white-space:nowrap">5155778</div>
<div class="grid abs" style="left:987px;top:627px;line-height:16px;padding-top:6px;white-space:nowrap">Axiom Mem…</div>
<div class="grid abs" style="left:1087px;top:627px;width:99px;text-align:right;line-height:16px;padding-top:6px;white-space:nowrap">0</div>
<div class="grid abs" style="left:1616px;top:627px;line-height:16px;padding-top:6px;white-space:nowrap">Y</div>
<div class="grid abs" style="left:302px;top:657px;line-height:16px;padding-top:6px;white-space:nowrap">MINT-SECU…</div>
<div class="grid abs" style="left:406px;top:657px;line-height:16px;padding-top:6px;white-space:nowrap">Cisco Mentored Instal…</div>
<div class="grid abs" style="left:562px;top:657px;width:99px;text-align:right;line-height:16px;padding-top:6px;white-space:nowrap">$1100.00</div>
<div class="grid abs" style="left:667px;top:657px;width:99px;text-align:right;line-height:16px;padding-top:6px;white-space:nowrap">$1199.00</div>
<div class="grid abs" style="left:772px;top:657px;width:99px;text-align:right;line-height:16px;padding-top:6px;white-space:nowrap">$1250.00</div>
<div class="grid abs" style="left:882px;top:657px;line-height:16px;padding-top:6px;white-space:nowrap">7236391</div>
<div class="grid abs" style="left:987px;top:657px;line-height:16px;padding-top:6px;white-space:nowrap">Cisco Syste…</div>
<div class="grid abs" style="left:1087px;top:657px;width:99px;text-align:right;line-height:16px;padding-top:6px;white-space:nowrap">0</div>
<div class="grid abs" style="left:1616px;top:657px;line-height:16px;padding-top:6px;white-space:nowrap">Y</div>
<div class="grid abs" style="left:302px;top:687px;line-height:16px;padding-top:6px;white-space:nowrap">NetMonitoring</div>
<div class="grid abs" style="left:406px;top:687px;line-height:16px;padding-top:6px;white-space:nowrap">Network Monitoring</div>
<div class="grid abs" style="left:562px;top:687px;width:99px;text-align:right;line-height:16px;padding-top:6px;white-space:nowrap">$200.00</div>
<div class="grid abs" style="left:667px;top:687px;width:99px;text-align:right;line-height:16px;padding-top:6px;white-space:nowrap">$400.00</div>
<div class="grid abs" style="left:772px;top:687px;width:99px;text-align:right;line-height:16px;padding-top:6px;white-space:nowrap">$0.00</div>
<div class="grid abs" style="left:1087px;top:687px;width:99px;text-align:right;line-height:16px;padding-top:6px;white-space:nowrap">0</div>
<div class="grid abs" style="left:1616px;top:687px;line-height:16px;padding-top:6px;white-space:nowrap">Y</div>
<div class="grid abs" style="left:302px;top:717px;line-height:16px;padding-top:6px;white-space:nowrap">QuartReview</div>
<div class="grid abs" style="left:406px;top:717px;line-height:16px;padding-top:6px;white-space:nowrap">Quarterly Network As…</div>
<div class="grid abs" style="left:562px;top:717px;width:99px;text-align:right;line-height:16px;padding-top:6px;white-space:nowrap">$200.00</div>
<div class="grid abs" style="left:667px;top:717px;width:99px;text-align:right;line-height:16px;padding-top:6px;white-space:nowrap">$500.00</div>
<div class="grid abs" style="left:772px;top:717px;width:99px;text-align:right;line-height:16px;padding-top:6px;white-space:nowrap">$0.00</div>
<div class="grid abs" style="left:1087px;top:717px;width:99px;text-align:right;line-height:16px;padding-top:6px;white-space:nowrap">0</div>
<div class="grid abs" style="left:1616px;top:717px;line-height:16px;padding-top:6px;white-space:nowrap">Y</div>
<div class="grid abs" style="left:302px;top:747px;line-height:16px;padding-top:6px;white-space:nowrap">LaborLvl1</div>
<div class="grid abs" style="left:406px;top:747px;line-height:16px;padding-top:6px;white-space:nowrap">Level 1 Labor</div>
<div class="grid abs" style="left:562px;top:747px;width:99px;text-align:right;line-height:16px;padding-top:6px;white-space:nowrap">$50.00</div>
<div class="grid abs" style="left:667px;top:747px;width:99px;text-align:right;line-height:16px;padding-top:6px;white-space:nowrap">$60.00</div>
<div class="grid abs" style="left:772px;top:747px;width:99px;text-align:right;line-height:16px;padding-top:6px;white-space:nowrap">$0.00</div>
<div class="grid abs" style="left:1087px;top:747px;width:99px;text-align:right;line-height:16px;padding-top:6px;white-space:nowrap">0</div>
<div class="grid abs" style="left:1406px;top:747px;line-height:16px;padding-top:6px;white-space:nowrap">M20</div>
<div class="grid abs" style="left:1616px;top:747px;line-height:16px;padding-top:6px;white-space:nowrap">Y</div>
<div class="grid abs" style="left:302px;top:777px;line-height:16px;padding-top:6px;white-space:nowrap">LaborLvl2</div>
<div class="grid abs" style="left:406px;top:777px;line-height:16px;padding-top:6px;white-space:nowrap">Level 2 Labor</div>
<div class="grid abs" style="left:562px;top:777px;width:99px;text-align:right;line-height:16px;padding-top:6px;white-space:nowrap">$75.00</div>
<div class="grid abs" style="left:667px;top:777px;width:99px;text-align:right;line-height:16px;padding-top:6px;white-space:nowrap">$90.00</div>
<div class="grid abs" style="left:772px;top:777px;width:99px;text-align:right;line-height:16px;padding-top:6px;white-space:nowrap">$0.00</div>
<div class="grid abs" style="left:1087px;top:777px;width:99px;text-align:right;line-height:16px;padding-top:6px;white-space:nowrap">0</div>
<div class="grid abs" style="left:1406px;top:777px;line-height:16px;padding-top:6px;white-space:nowrap">M20</div>
<div class="grid abs" style="left:1616px;top:777px;line-height:16px;padding-top:6px;white-space:nowrap">Y</div>
<div class="grid abs" style="left:302px;top:806px;line-height:16px;padding-top:6px;white-space:nowrap">LaborLvl3</div>
<div class="grid abs" style="left:406px;top:806px;line-height:16px;padding-top:6px;white-space:nowrap">Level 3 Labor</div>
<div class="grid abs" style="left:562px;top:806px;width:99px;text-align:right;line-height:16px;padding-top:6px;white-space:nowrap">$100.00</div>
<div class="grid abs" style="left:667px;top:806px;width:99px;text-align:right;line-height:16px;padding-top:6px;white-space:nowrap">$120.00</div>
<div class="grid abs" style="left:772px;top:806px;width:99px;text-align:right;line-height:16px;padding-top:6px;white-space:nowrap">$0.00</div>
<div class="grid abs" style="left:1087px;top:806px;width:99px;text-align:right;line-height:16px;padding-top:6px;white-space:nowrap">0</div>
<div class="grid abs" style="left:1406px;top:806px;line-height:16px;padding-top:6px;white-space:nowrap">M20</div>
<div class="grid abs" style="left:1616px;top:806px;line-height:16px;padding-top:6px;white-space:nowrap">Y</div>
<div class="grid abs" style="left:302px;top:836px;line-height:16px;padding-top:6px;white-space:nowrap">1yrWarranty</div>
<div class="grid abs" style="left:406px;top:836px;line-height:16px;padding-top:6px;white-space:nowrap">1 Year Extended War…</div>
<div class="grid abs" style="left:562px;top:836px;width:99px;text-align:right;line-height:16px;padding-top:6px;white-space:nowrap">$48.00</div>
<div class="grid abs" style="left:667px;top:836px;width:99px;text-align:right;line-height:16px;padding-top:6px;white-space:nowrap">$57.60</div>
<div class="grid abs" style="left:772px;top:836px;width:99px;text-align:right;line-height:16px;padding-top:6px;white-space:nowrap">$0.00</div>
<div class="grid abs" style="left:1087px;top:836px;width:99px;text-align:right;line-height:16px;padding-top:6px;white-space:nowrap">0</div>
<div class="grid abs" style="left:1406px;top:836px;line-height:16px;padding-top:6px;white-space:nowrap">M20</div>
<div class="grid abs" style="left:1616px;top:836px;line-height:16px;padding-top:6px;white-space:nowrap">Y</div>
<div class="grid abs" style="left:302px;top:866px;line-height:16px;padding-top:6px;white-space:nowrap">2yrWarranty</div>
<div class="grid abs" style="left:406px;top:866px;line-height:16px;padding-top:6px;white-space:nowrap">2 Year Extended War…</div>
<div class="grid abs" style="left:562px;top:866px;width:99px;text-align:right;line-height:16px;padding-top:6px;white-space:nowrap">$90.00</div>
<div class="grid abs" style="left:667px;top:866px;width:99px;text-align:right;line-height:16px;padding-top:6px;white-space:nowrap">$108.00</div>
<div class="grid abs" style="left:772px;top:866px;width:99px;text-align:right;line-height:16px;padding-top:6px;white-space:nowrap">$0.00</div>
<div class="grid abs" style="left:1087px;top:866px;width:99px;text-align:right;line-height:16px;padding-top:6px;white-space:nowrap">0</div>
<div class="grid abs" style="left:1406px;top:866px;line-height:16px;padding-top:6px;white-space:nowrap">M20</div>
<div class="grid abs" style="left:1616px;top:866px;line-height:16px;padding-top:6px;white-space:nowrap">Y</div>
<div class="grid abs" style="left:302px;top:896px;line-height:16px;padding-top:6px;white-space:nowrap">3yrWarranty</div>
<div class="grid abs" style="left:406px;top:896px;line-height:16px;padding-top:6px;white-space:nowrap">3 Year Extended War…</div>
<div class="grid abs" style="left:562px;top:896px;width:99px;text-align:right;line-height:16px;padding-top:6px;white-space:nowrap">$125.00</div>
<div class="grid abs" style="left:667px;top:896px;width:99px;text-align:right;line-height:16px;padding-top:6px;white-space:nowrap">$150.00</div>
<div class="grid abs" style="left:772px;top:896px;width:99px;text-align:right;line-height:16px;padding-top:6px;white-space:nowrap">$0.00</div>
<div class="grid abs" style="left:1087px;top:896px;width:99px;text-align:right;line-height:16px;padding-top:6px;white-space:nowrap">0</div>
<div class="grid abs" style="left:1406px;top:896px;line-height:16px;padding-top:6px;white-space:nowrap">M20</div>
<div class="grid abs" style="left:1616px;top:896px;line-height:16px;padding-top:6px;white-space:nowrap">Y</div>
<div class="abs" style="left:297px;top:925px;width:1401px;height:1px;background:#ddd"></div>
<div class="abs" style="left:1698px;top:536px;width:15px;height:459px;background:#c4c4c4"></div>
<div class="abs" style="left:1699px;top:537px;width:12px;height:12px;background:#f8f8f8;border:1px solid #e4e4e4"></div>
<svg class="abs" style="left:1701px;top:540px" width="8" height="6"><path d="M0 5 L4 0 L8 5Z" fill="#555"/></svg>
<div class="abs" style="left:1699px;top:968px;width:12px;height:12px;background:#f8f8f8;border:1px solid #e4e4e4"></div>
<svg class="abs" style="left:1701px;top:971px" width="8" height="6"><path d="M0 0 L4 5 L8 0Z" fill="#555"/></svg>
<div class="abs" style="left:297px;top:981px;width:1401px;height:14px;background:#c4c4c4"></div>
<div class="abs" style="left:298px;top:982px;width:12px;height:12px;background:#f8f8f8;border:1px solid #e4e4e4"></div>
<svg class="abs" style="left:301px;top:984px" width="6" height="8"><path d="M5 0 L0 4 L5 8Z" fill="#555"/></svg>
<div class="abs" style="left:312px;top:982px;width:317px;height:12px;background:#f8f8f8;border:1px solid #e4e4e4"></div>
<div class="abs" style="left:1685px;top:982px;width:12px;height:12px;background:#f8f8f8;border:1px solid #e4e4e4"></div>
<svg class="abs" style="left:1688px;top:984px" width="6" height="8"><path d="M0 0 L5 4 L0 8Z" fill="#555"/></svg>
</body></html>
